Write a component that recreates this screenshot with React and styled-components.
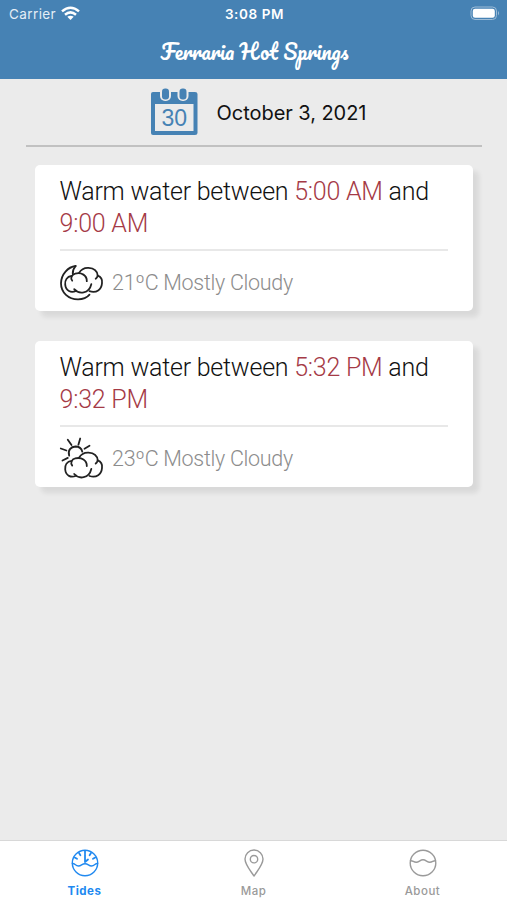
import React from "react";
import styled, { createGlobalStyle } from "styled-components";

const GlobalStyle = createGlobalStyle`
  * {
    box-sizing: border-box;
  }
  body {
    margin: 0;
    background: #ebebeb;
  }
`;

const Screen = styled.div`
  display: flex;
  flex-direction: column;
  height: 100vh;
  background: #ebebeb;
  font-family: Roboto, sans-serif;
`;
const Header = styled.header`
  height: 79px;
  flex: none;
  background: #4682b4;
  color: #fff;
`;
const StatusBar = styled.div`
  display: grid;
  grid-template-columns: 1fr auto 1fr;
  align-items: center;
  height: 27px;
  padding: 0 7px 0 9px;
  font-family: Inter, sans-serif;
  font-size: 13px;
`;
const Carrier = styled.span`
  display: flex;
  align-items: center;
  gap: 5px;
  font-size: 13.5px;
  letter-spacing: 0.4px;
  color: #e4eef6;
`;
const Clock = styled.span`
  font-size: 13.5px;
  font-weight: 600;
  letter-spacing: 0.6px;
`;
const Battery = styled.svg`
  justify-self: end;
`;
const Title = styled.h1`
  margin: 0;
  height: 50px;
  line-height: 50px;
  text-align: center;
  font-family: Pacifico, cursive;
  font-weight: normal;
  font-size: 20.3px;
  padding-left: 2px;
`;
const Content = styled.main`
  flex: 1;
  padding: 0 25px 0 26px;
`;
const DateRow = styled.div`
  display: flex;
  justify-content: center;
  align-items: center;
  gap: 19px;
  height: 67.5px;
  padding: 0 0 0 8px;
  border-bottom: 2px solid #c1c1c1;
`;
const DateText = styled.span`
  padding-top: 2px;
  font-family: Inter, sans-serif;
  font-size: 20px;
  letter-spacing: -0.05px;
  color: #111;
`;
const Cards = styled.div`
  display: flex;
  flex-direction: column;
  gap: 29.5px;
  padding: 18px 9px 0;
`;
const Card = styled.section`
  height: 146.5px;
  padding: 11px 25px 0;
  background: #fff;
  border-radius: 5px;
  box-shadow: 6px 6px 5px rgba(0, 0, 0, 0.08);
`;
const Message = styled.p`
  margin: 0 0 0 -0.5px;
  height: 75px;
  font-size: 25px;
  font-weight: 300;
  line-height: 32px;
  letter-spacing: -0.24px;
  color: #111;
  border-bottom: 2px solid #e8e8e8;
`;
const Time = styled.span`
  color: #a53a46;
`;
const Weather = styled.div`
  display: flex;
  align-items: center;
  gap: 9.5px;
  height: 60px;
  margin-left: -0.5px;
  padding-top: 4px;
  font-size: 21.5px;
  font-weight: 300;
  letter-spacing: -0.3px;
  color: #8c8c8c;
`;
const WeatherIcon = styled.svg`
  width: 43px;
  height: 42px;
  flex: none;
  overflow: visible;
  fill: none;
  stroke: #222;
  stroke-width: 1.8;
  stroke-linecap: round;
  stroke-linejoin: round;
`;
const TabBar = styled.nav`
  display: grid;
  grid-template-columns: repeat(3, 1fr);
  flex: none;
  height: 60px;
  background: #fff;
  border-top: 1px solid #d8d8d8;
`;
const Tab = styled.div`
  display: flex;
  flex-direction: column;
  align-items: center;
  gap: 7px;
  padding-top: 8px;
  color: ${(props) => (props.$active ? "#2089f0" : "#9a9a9a")};
  font-family: Inter, sans-serif;
  font-size: 11.5px;
  font-weight: ${(props) => (props.$active ? 700 : 500)};
  line-height: 15px;
  letter-spacing: 0.5px;

  svg {
    width: 28px;
    height: 28px;
    fill: none;
    stroke: currentColor;
    stroke-width: 1.4;
    stroke-linecap: round;
  }
`;

function WifiIcon() {
  return (
    <svg width="19" height="15" viewBox="0 0 19 15" fill="none" stroke="#fff" strokeWidth="2.5">
      <path d="M1 5.4Q9.5-2 18 5.4M4 8.7Q9.5 4 15 8.7" />
      <path d="M9.5 14 6.3 10.8Q9.5 8.6 12.7 10.8Z" fill="#fff" stroke="none" />
    </svg>
  );
}

function CalendarIcon() {
  return (
    <svg width="48" height="48" viewBox="0 0 48 48">
      <path d="M3 4H45Q47.5 4 47.5 6V45Q47.5 47 45 47H3Q1 47 1 45V6Q1 4 3 4Z" fill="#4682b4" />
      <path d="M5 16H43.5V43H5Z" fill="#ebebeb" />
      <rect x="10" y="-1" width="11" height="14" rx="5" fill="#ebebeb" />
      <rect x="27.5" y="-1" width="11" height="14" rx="5" fill="#ebebeb" />
      <rect x="12" y="0.5" width="7" height="11" rx="3.2" fill="#4682b4" />
      <rect x="29.5" y="0.5" width="7" height="11" rx="3.2" fill="#4682b4" />
      <text x="24.2" y="38" textAnchor="middle" fontFamily="Liberation Sans, sans-serif" fontSize="23" fill="#4682b4">
        30
      </text>
    </svg>
  );
}

function Cloud() {
  return (
    <>
      <path d="M19 11.8C21 8.3 24.5 6.5 28.5 6.7C34 7 37.3 10 37.7 14.4C41 15.6 42.5 18.3 42 22C41.5 28.5 36.5 32 29.5 30" />
      <path d="M37.7 14.4Q37.2 16.5 35.7 17.6" />
      <path d="M12.2 19.5C10.2 17.5 11.5 13.2 15.2 12.4C21.5 10.8 27 14.2 26.8 20" />
      <path d="M11.5 14.8C7 15.5 4.7 19 5.2 23.5C5.8 29.7 11 32.2 16 29.7" />
      <path d="M14.2 28C19 33.5 29 32.8 31.3 23" />
    </>
  );
}

function NightCloud() {
  return (
    <WeatherIcon viewBox="0 0.8 43 42">
      <path d="M15.6 4.8C8 5.7 1.2 13 1 22C1 31.5 8.5 38 18 38.2C22.5 38.2 27 36.5 29.5 33.5" />
      <path d="M15.6 4.8C13.4 7.5 12.4 9.5 12.8 12.8" />
      <Cloud />
    </WeatherIcon>
  );
}

function DayCloud() {
  return (
    <WeatherIcon viewBox="0 -0.5 43 42">
      <path d="M7.8 1.2 11.5 6.5M20.2 0 18.4 6.2M24.5 10.2 29.5 7.3M.8 10 6.4 12M2.5 22 7.8 19.4" />
      <path d="M9.2 17.2C7.5 11.8 10.8 8.2 15.5 8C19 8 21.5 9.8 22.3 13.2" />
      <g transform="translate(0 7.5)">
        <Cloud />
      </g>
    </WeatherIcon>
  );
}

function TidesIcon() {
  return (
    <svg viewBox="0 0 28 28">
      <circle cx="14" cy="14" r="12.7" />
      <path d="M1.4 14.5C4 14.2 4.2 17 7.5 17C10.5 17 10.7 14.7 14 14.7S17.5 17 20.5 17C23.8 17 24 14.2 26.6 14.5" />
      <path d="M14 2V4.5M8 4 9.4 6.2M20 4 18.6 6.2M3.7 8.5 6 9.8M24.3 8.5 22 9.8M14 5.5V13M14 13 17 10.5" strokeWidth="1.8" />
    </svg>
  );
}

function PinIcon() {
  return (
    <svg viewBox="0 0 28 28">
      <path d="M14 27C10 21 5 15.5 5 10A9 9 0 0 1 23 10C23 15.5 18 21 14 27Z" strokeLinejoin="round" />
      <circle cx="14" cy="10.2" r="3.7" />
    </svg>
  );
}

function WaveIcon() {
  return (
    <svg viewBox="0 0 28 28">
      <circle cx="14" cy="14" r="12.8" />
      <path d="M1.5 11.7C4 11.4 4.5 13.3 7.3 13.2C10 13.2 11 10.8 14 10.8S18 13.2 20.7 13.2C23.5 13.3 24 11.4 26.5 11.7" />
    </svg>
  );
}

const periods = [
  { from: "5:00 AM", to: "9:00 AM", weather: "21ºC Mostly Cloudy", Icon: NightCloud },
  { from: "5:32 PM", to: "9:32 PM", weather: "23ºC Mostly Cloudy", Icon: DayCloud },
];

export default function App() {
  return (
    <Screen>
      <GlobalStyle />
      <Header>
        <StatusBar>
          <Carrier>
            Carrier
            <WifiIcon />
          </Carrier>
          <Clock>3:08 PM</Clock>
          <Battery width="30" height="15" viewBox="0 0 30 15">
            <rect x="1" y="1" width="25.5" height="12.5" rx="4" fill="none" stroke="#9dbcd7" />
            <rect x="2.8" y="2.8" width="22" height="9" rx="2.3" fill="#fff" />
            <path d="M28 5Q30 7.2 28 9.5Z" fill="#9dbcd7" />
          </Battery>
        </StatusBar>
        <Title>Ferraria Hot Springs</Title>
      </Header>
      <Content>
        <DateRow>
          <CalendarIcon />
          <DateText>October 3, 2021</DateText>
        </DateRow>
        <Cards>
          {periods.map(({ from, to, weather, Icon }) => (
            <Card key={from}>
              <Message>
                Warm water between <Time>{from}</Time> and <Time>{to}</Time>
              </Message>
              <Weather>
                <Icon />
                {weather}
              </Weather>
            </Card>
          ))}
        </Cards>
      </Content>
      <TabBar>
        <Tab $active>
          <TidesIcon />
          Tides
        </Tab>
        <Tab>
          <PinIcon />
          Map
        </Tab>
        <Tab>
          <WaveIcon />
          About
        </Tab>
      </TabBar>
    </Screen>
  );
}
